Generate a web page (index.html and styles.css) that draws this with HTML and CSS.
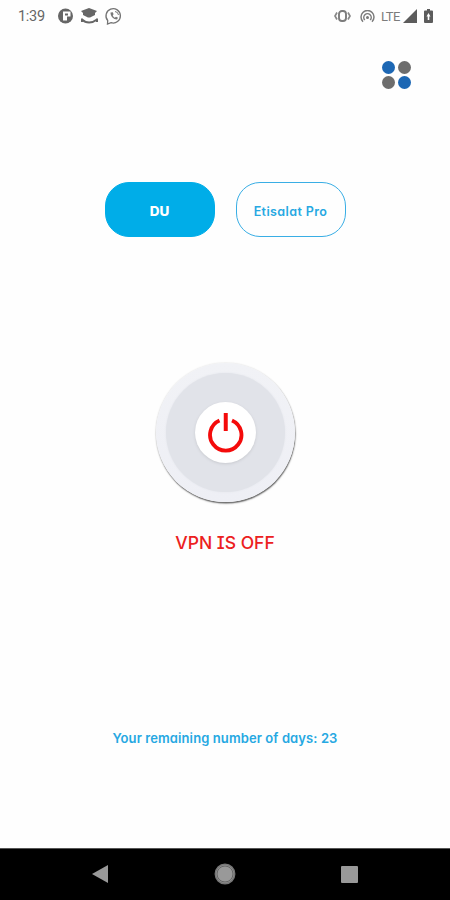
FILE: index.html
```
<!DOCTYPE html>
<html lang="en">
<head>
    <meta charset="UTF-8">
    <meta name="viewport" content="width=device-width, initial-scale=1.0">
    <title>VPN</title>
    <link rel="stylesheet" href="styles.css">
</head>
<body>

    <div class="status-bar">
        <span class="clock">1:39</span>
        <svg class="status-icons" width="66" height="18" viewBox="0 0 66 18">
            <circle cx="8.500" cy="9" r="7.500" fill="#666"/>
            <path d="M6 4.500h7.500v5H10v4H6z" fill="#fff"/>
            <path d="M8 6.500h3v2H8z" fill="#666"/>
            <path d="M24 4l8-3 8 3-2 2v2l-5 2.500h-2L26 8V6z" fill="#666"/>
            <path d="M25 12.500c4 4 10 4 15 0M25 11.500v3.500M40 11.500V15" fill="none" stroke="#666" stroke-width="2"/>
            <path d="M50.500 17l.2-3.500a7.200 7.200 0 1 1 3.300 2.200z" fill="none" stroke="#737373" stroke-width="1.300"/>
            <path d="M53.500 5.500c0 4 3 7 6.500 7l1-1.800-2-1-1.200 1c-1-.5-1.800-1.300-2-2.400l.8-1-.8-2z" fill="#777"/>
            <path d="M58 4.500a4 4 0 0 1 3.500 3.500" fill="none" stroke="#777"/>
        </svg>
        <svg class="vibrate" width="17" height="12" viewBox="0 0 17 12">
            <path d="M3 2.500L1 6l2 3.500M14 2.500L16 6l-2 3.500" fill="none" stroke="#888" stroke-width="1.700"/>
            <rect x="5" y="1" width="7" height="10" rx="3" fill="none" stroke="#7c7c7c" stroke-width="1.900"/>
        </svg>
        <svg class="hotspot" width="15" height="13" viewBox="0 0 15 13">
            <path d="M3 11.700a6.500 6.500 0 1 1 9 0M4.800 10a3.700 3.700 0 1 1 5.400 0" fill="none" stroke="#7c7c7c" stroke-width="1.500"/>
            <circle cx="7.500" cy="7.500" r="1.500" fill="#777"/>
        </svg>
        <span class="network">LTE</span>
        <svg class="signal" width="14" height="14" viewBox="0 0 14 14">
            <path d="M14 0v14H0z" fill="#5c5c5c"/>
        </svg>
        <svg class="battery" width="9" height="14" viewBox="0 0 9 14">
            <path d="M3 0h3v1.500h2q1 0 1 1V13q0 1-1 1H1q-1 0-1-1V2.500q0-1 1-1h2z" fill="#5c5c5c"/>
            <path d="M4.500 4L2.500 7.500h1.200V11h1.600V7.500h1.200z" fill="#fff"/>
        </svg>
    </div>

    <div class="container">
        <div class="menu">
            <span class="dot blue"></span>
            <span class="dot"></span>
            <span class="dot"></span>
            <span class="dot blue"></span>
        </div>

        <div class="servers">
            <button class="btn du-btn">DU</button>
            <button class="btn etisalat-btn">Etisalat Pro</button>
        </div>

        <button class="power" id="powerBtn" aria-label="Connect">
            <span class="power-ring">
                <span class="power-center">
                    <svg width="38" height="42" viewBox="0 0 38 42">
                        <path d="M12.500 8.500a15.700 15.700 0 1 0 12.500 0" fill="none" stroke="#f40b0b" stroke-width="3.800"/>
                        <path d="M18.750 1v18" stroke="#f40b0b" stroke-width="4"/>
                    </svg>
                </span>
            </span>
        </button>

        <p class="vpn-status">VPN IS OFF</p>
        <p class="days">Your remaining number of days: 23</p>
    </div>

    <div class="nav-bar">
        <svg width="16" height="18" viewBox="0 0 16 18">
            <path d="M0 9L16 0v18z" fill="#999"/>
        </svg>
        <svg width="22" height="22" viewBox="0 0 22 22">
            <circle cx="11" cy="11" r="9.700" fill="#999" stroke="#777" stroke-width="1.500"/>
            <circle cx="11" cy="11" r="8" fill="none" stroke="#666" stroke-width="1"/>
        </svg>
        <svg width="17" height="17" viewBox="0 0 17 17">
            <rect width="17" height="17" rx="1" fill="#999"/>
        </svg>
    </div>

</body>
</html>
```
FILE: styles.css
```
body {
    font-family: Inter, sans-serif;
    font-feature-settings: "cv08", "cv11";
    background: #fefefe;
    margin: 0;
    height: 900px;
    display: flex;
    flex-direction: column;
    overflow: hidden;
}
.status-bar {
    display: flex;
    align-items: center;
    height: 32px;
    padding: 0 17px 0 18px;
    color: #666;
}
.clock {
    width: 39px;
    font-family: Roboto, sans-serif;
    font-size: 14.5px;
    letter-spacing: -0.3px;
}
.vibrate {
    margin-left: auto;
    margin-right: 9px;
}
.hotspot {
    margin-right: 6px;
}
.network {
    width: 22px;
    font-family: Roboto, sans-serif;
    font-size: 13px;
    letter-spacing: -0.5px;
    color: #7c7c7c;
}
.battery {
    margin-left: 7px;
}
.container {
    flex: 1;
    display: flex;
    flex-direction: column;
    align-items: center;
}
.menu {
    align-self: flex-end;
    display: grid;
    grid-template-columns: 13px 13px;
    gap: 2px 3px;
    margin: 29px 39px 0 0;
}
.dot {
    width: 13px;
    height: 13px;
    border-radius: 50%;
    background: #6d6d6d;
}
.dot.blue {
    background: #1c67b4;
}
.servers {
    display: flex;
    gap: 21px;
    margin-top: 93px;
}
.btn {
    width: 110px;
    height: 55px;
    padding: 3px 0 0;
    border: 1px solid #39aee5;
    border-radius: 24px;
    font-family: inherit;
    font-feature-settings: inherit;
    font-size: 12.5px;
    font-weight: 600;
    white-space: nowrap;
    cursor: pointer;
}
.du-btn {
    background: #00ade8;
    border-color: #00ade8;
    color: white;
    font-size: 13.5px;
    font-weight: 800;
}
.etisalat-btn {
    background: #fefefe;
    color: #26a8e2;
    letter-spacing: 0.4px;
}
.power {
    display: flex;
    align-items: center;
    justify-content: center;
    width: 139px;
    height: 139px;
    margin: 126px 0 0 1px;
    padding: 0;
    border: none;
    border-radius: 50%;
    background: linear-gradient(#f1f2f6, #eeeff5);
    box-shadow: 0.5px 1.5px 1.5px #666, 0 0 2px #ddd;
    cursor: pointer;
}
.power-ring {
    display: flex;
    align-items: center;
    justify-content: center;
    width: 119px;
    height: 119px;
    border-radius: 50%;
    background: #e1e3e9;
    box-shadow: 0 0 2px #e1e3e9;
}
.power-center {
    display: flex;
    align-items: center;
    justify-content: center;
    width: 61px;
    height: 61px;
    border-radius: 50%;
    background: white;
    box-shadow: 0 1px 3px #c8cacf;
}
.vpn-status {
    margin: 30px 0 0;
    font-size: 17.5px;
    line-height: 22px;
    font-weight: 500;
    color: #ec2020;
}
.days {
    margin: 175px 0 0;
    font-size: 13px;
    line-height: 18px;
    font-weight: 600;
    letter-spacing: 0.1px;
    color: #26a8e2;
}
.nav-bar {
    display: flex;
    align-items: center;
    justify-content: space-between;
    height: 52px;
    padding: 0 92px 1px;
    box-sizing: border-box;
    background: black;
    border-top: 1px solid #555;
}
```
